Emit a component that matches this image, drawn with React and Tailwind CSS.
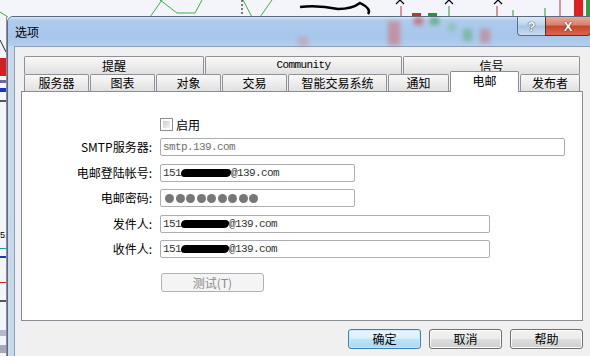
import React from 'react';

const CJK = "[font-family:'Noto_Sans_CJK_SC',sans-serif]";
const MONO = "[font-family:'Liberation_Mono','Noto_Sans_CJK_SC',monospace]";

const TOP_TABS = [
    { label: '提醒', w: 'w-[180px]' },
    { label: 'Community', w: 'w-[197px]', mono: true },
    { label: '信号', w: 'w-[177px]' },
];

const BOTTOM_TABS = [
    { label: '服务器', w: 'w-[65px]' },
    { label: '图表', w: 'w-[65px]' },
    { label: '对象', w: 'w-[65px]' },
    { label: '交易', w: 'w-[65px]' },
    { label: '智能交易系统', w: 'w-[99px]' },
    { label: '通知', w: 'w-[61px]' },
    { label: '电邮', w: 'w-[69px]', active: true },
    { label: '发布者', w: 'w-[60px]' },
];

// chart behind the dialog (only top strip and left edge show)
const ChartBackdrop = () => (
    <svg className="absolute inset-0" width="590" height="356" viewBox="0 0 590 356">
        <rect width="590" height="356" fill="#f4f4fb" />
        <polyline points="0,12 8,17" fill="none" stroke="#3cb043" strokeWidth="1" />
        <polyline points="150,17 162,0" fill="none" stroke="#3cb043" strokeWidth="1" />
        <polyline points="160,0 177,13 195,13 202,0" fill="none" stroke="#3cb043" strokeWidth="1" />
        <polyline points="243,0 252,17 260,17 272,0" fill="none" stroke="#3cb043" strokeWidth="1" />
        <line x1="242" y1="0" x2="242" y2="17" stroke="#000" strokeWidth="1" strokeDasharray="2,2" />
        <path d="M300 7 Q318 5 338 9 Q352 9 360 3 Q372 9 368 14" fill="none" stroke="#000" strokeWidth="2.5" />
        <path d="M396 4 L400 0 L404 4" fill="none" stroke="#000" strokeWidth="1.2" />
        <path d="M445 4 L449 0 L453 4" fill="none" stroke="#000" strokeWidth="1.2" />
        <path d="M494 4 L498 0 L502 4" fill="none" stroke="#000" strokeWidth="1.2" />
        <line x1="401" y1="6" x2="401" y2="17" stroke="#c03030" />
        <line x1="449" y1="6" x2="449" y2="17" stroke="#3a8a3a" />
        <line x1="497" y1="6" x2="497" y2="17" stroke="#c03030" />
        <line x1="513" y1="10" x2="513" y2="17" stroke="#3a8a3a" />
        <line x1="545" y1="8" x2="545" y2="17" stroke="#3a8a3a" />
        <rect x="412" y="13" width="9" height="4" fill="#c83232" />
        <rect x="428" y="13" width="9" height="4" fill="#2f8f3f" />
        <line x1="560" y1="0" x2="560" y2="17" stroke="#c03030" />
        <rect x="574" y="0" width="9" height="17" fill="#e02020" />
        <rect x="586" y="0" width="4" height="17" fill="#2f9f3f" />
        <line x1="0" y1="40" x2="6" y2="52" stroke="#222" />
        <rect x="0" y="58" width="7" height="18" fill="#d42020" />
        <rect x="0" y="80" width="7" height="3" fill="#6a6a9a" />
        <rect x="0" y="88" width="7" height="4" fill="#2030c0" />
        <rect x="0" y="100" width="7" height="2" fill="#555" />
        <text x="0" y="238" fontSize="9" fill="#000" fontFamily="Liberation Sans">5.</text>
        <rect x="0" y="248" width="7" height="1" fill="#2a9a9a" />
        <rect x="0" y="256" width="7" height="2" fill="#2030c0" />
        <rect x="0" y="282" width="7" height="1" fill="#d02020" />
        <rect x="0" y="300" width="7" height="2" fill="#555" />
        <rect x="0" y="330" width="7" height="6" fill="#b8b8c8" />
        <rect x="0" y="345" width="7" height="8" fill="#a8a8b8" />
        <line x1="6.5" y1="17" x2="6.5" y2="356" stroke="#8a8a9a" />
    </svg>
);

const Tab = ({ label, w, mono, active }) => (
    <div
        className={`${w} flex items-center justify-center border border-b-0 rounded-t-[2px] text-[12px] leading-none text-black ${
            active
                ? 'relative z-10 -mt-[3px] h-[21px] border-[#898c95] bg-white pb-[3px]'
                : 'h-full border-[#8e9199] bg-[linear-gradient(#f8f8f8,#ececec_55%,#e0e0e0)]'
        }`}
    >
        <span className={mono ? `${MONO} text-[11px] tracking-[-0.6px]` : CJK}>{label}</span>
    </div>
);

const Field = ({ w, children, muted }) => (
    <div
        className={`${w} h-[18px] flex items-center border border-[#abadb3] rounded-[2px] bg-white px-[2px] ${MONO} text-[11px] tracking-[-0.6px] ${
            muted ? 'text-[#707070]' : 'text-[#333]'
        }`}
    >
        {children}
    </div>
);

const Redacted = ({ w = 'w-[48px]' }) => (
    <span className={`inline-block ${w} h-[8px] bg-black rounded-full -skew-x-12`} />
);

const Row = ({ label, children, className = '' }) => (
    <div className={`flex items-center ${className}`}>
        <div className={`w-[130px] text-right text-[12px] leading-none text-black ${CJK}`}>{label}</div>
        <div className="ml-[8px]">{children}</div>
    </div>
);

const DlgButton = ({ children, primary }) => (
    <div
        className={`w-[73px] h-[20px] flex items-center justify-center rounded-[3px] border text-[12px] leading-none text-black ${CJK} ${
            primary
                ? 'border-[#3c7fb1] bg-[linear-gradient(#ecf7fd,#d7eefb_50%,#bfe3f7_51%,#a7d8f4)] shadow-[inset_0_0_0_1px_#c9ecfb]'
                : 'border-[#707070] bg-[linear-gradient(#f2f2f2,#ebebeb_50%,#dddddd_51%,#cfcfcf)] shadow-[inset_0_0_0_1px_#fcfcfc]'
        }`}
    >
        {children}
    </div>
);

export default function App() {
    return (
        <div className="relative w-[590px] h-[356px] overflow-hidden">
            <ChartBackdrop />

            {/* dialog window */}
            <div className="absolute left-[7px] top-[16px] w-[590px] h-[360px] rounded-t-[6px] border border-[#5a6b80] bg-[linear-gradient(90deg,#c9d9ec,#c2d6ee)] flex flex-col overflow-hidden">
                {/* title bar */}
                <div className="relative h-[29px] flex items-start bg-[linear-gradient(180deg,#d7e5f5_0%,#aecbec_12%,#a7c6ea_70%,#b4cfee_100%)]">
                    <svg className="absolute inset-0 blur-[2px]" width="588" height="29">
                        <rect x="380" y="4" width="12" height="24" fill="#d66a6a" opacity="0.55" />
                        <rect x="406" y="0" width="9" height="8" fill="#c84a4a" opacity="0.6" />
                        <rect x="422" y="0" width="9" height="8" fill="#3f9f55" opacity="0.6" />
                        <rect x="455" y="12" width="9" height="12" fill="#4fae65" opacity="0.5" />
                        <rect x="472" y="12" width="10" height="14" fill="#d06a6a" opacity="0.5" />
                        <rect x="440" y="6" width="8" height="8" fill="#5fbf75" opacity="0.4" />
                        <rect x="290" y="20" width="10" height="9" fill="#d88080" opacity="0.4" />
                    </svg>
                    <span className={`relative ml-[7px] mt-[9px] text-[12px] leading-none text-black ${CJK}`}>选项</span>
                    <div className="relative ml-auto mr-[5px] flex">
                        <div className="w-[28px] h-[19px] flex items-center justify-center rounded-bl-[4px] border border-t-0 border-r-0 border-[#5b6f8a] bg-[linear-gradient(#dce9f7,#bcd3ee_45%,#a9c4e4_50%,#c8dcf2)]">
                            <span className="text-[13px] font-bold leading-none text-white [font-family:'Liberation_Sans',sans-serif] [text-shadow:0_0_1px_#333,0_0_1px_#333]">?</span>
                        </div>
                        <div className="w-[46px] h-[19px] flex items-center justify-center rounded-br-[4px] border border-t-0 border-[#6b2a20] bg-[linear-gradient(#e9a897,#d77e67_45%,#c7442c_50%,#d8674c)]">
                            <span className="text-[13px] font-bold leading-none text-white [font-family:'Liberation_Sans',sans-serif] [text-shadow:0_0_1px_#4a1a10,0_0_1px_#4a1a10]">X</span>
                        </div>
                    </div>
                </div>

                {/* frame + client */}
                <div className="flex-1 pl-[6px]">
                    <div className="h-full border-l border-t border-[#8a9db6] bg-[#f0f0f0] pl-[6px] pt-[9px]">
                        {/* tab strip */}
                        <div className="ml-[3px] flex gap-px h-[18px]">
                            {TOP_TABS.map((t) => (
                                <Tab key={t.label} {...t} />
                            ))}
                        </div>
                        <div className="ml-[3px] flex gap-px h-[17px]">
                            {BOTTOM_TABS.map((t) => (
                                <Tab key={t.label} {...t} />
                            ))}
                        </div>

                        {/* page */}
                        <div className="w-[562px] h-[230px] border border-[#898c95] bg-white pt-[26px]">
                            <div className="flex items-center ml-[138px]">
                                <div className="w-[13px] h-[13px] border border-[#8e8f8f] bg-white p-[2px]">
                                    <div className="w-full h-full bg-[linear-gradient(135deg,#cbcbcb,#f4f4f4)]" />
                                </div>
                                <span className={`ml-[3px] text-[12px] leading-none text-black ${CJK}`}>启用</span>
                            </div>

                            <Row label="SMTP服务器:" className="mt-[7px]">
                                <Field w="w-[405px]" muted>smtp.139.com</Field>
                            </Row>
                            <Row label="电邮登陆帐号:" className="mt-[8px]">
                                <Field w="w-[195px]">
                                    151<Redacted w="w-[50px]" />@139.com
                                </Field>
                            </Row>
                            <Row label="电邮密码:" className="mt-[7px]">
                                <Field w="w-[195px]">
                                    <div className="ml-[2px] flex gap-[1.5px]">
                                        {Array.from({ length: 9 }).map((_, i) => (
                                            <span key={i} className="w-[9px] h-[9px] rounded-full bg-[#777]" />
                                        ))}
                                    </div>
                                </Field>
                            </Row>
                            <Row label="发件人:" className="mt-[8px]">
                                <Field w="w-[330px]">
                                    151<Redacted />@139.com
                                </Field>
                            </Row>
                            <Row label="收件人:" className="mt-[7px]">
                                <Field w="w-[330px]">
                                    151<Redacted />@139.com
                                </Field>
                            </Row>

                            <div className="ml-[139px] mt-[15px] w-[103px] h-[19px] flex items-center justify-center rounded-[3px] border border-[#adb2b5] bg-[#f4f4f4]">
                                <span className={`text-[12px] leading-none text-[#8a8a8a] ${CJK}`}>测试(T)</span>
                            </div>
                        </div>

                        {/* dialog buttons */}
                        <div className="w-[562px] mt-[8px] flex justify-end gap-[8px]">
                            <DlgButton primary>确定</DlgButton>
                            <DlgButton>取消</DlgButton>
                            <DlgButton>帮助</DlgButton>
                        </div>
                    </div>
                </div>
            </div>
        </div>
    );
}
